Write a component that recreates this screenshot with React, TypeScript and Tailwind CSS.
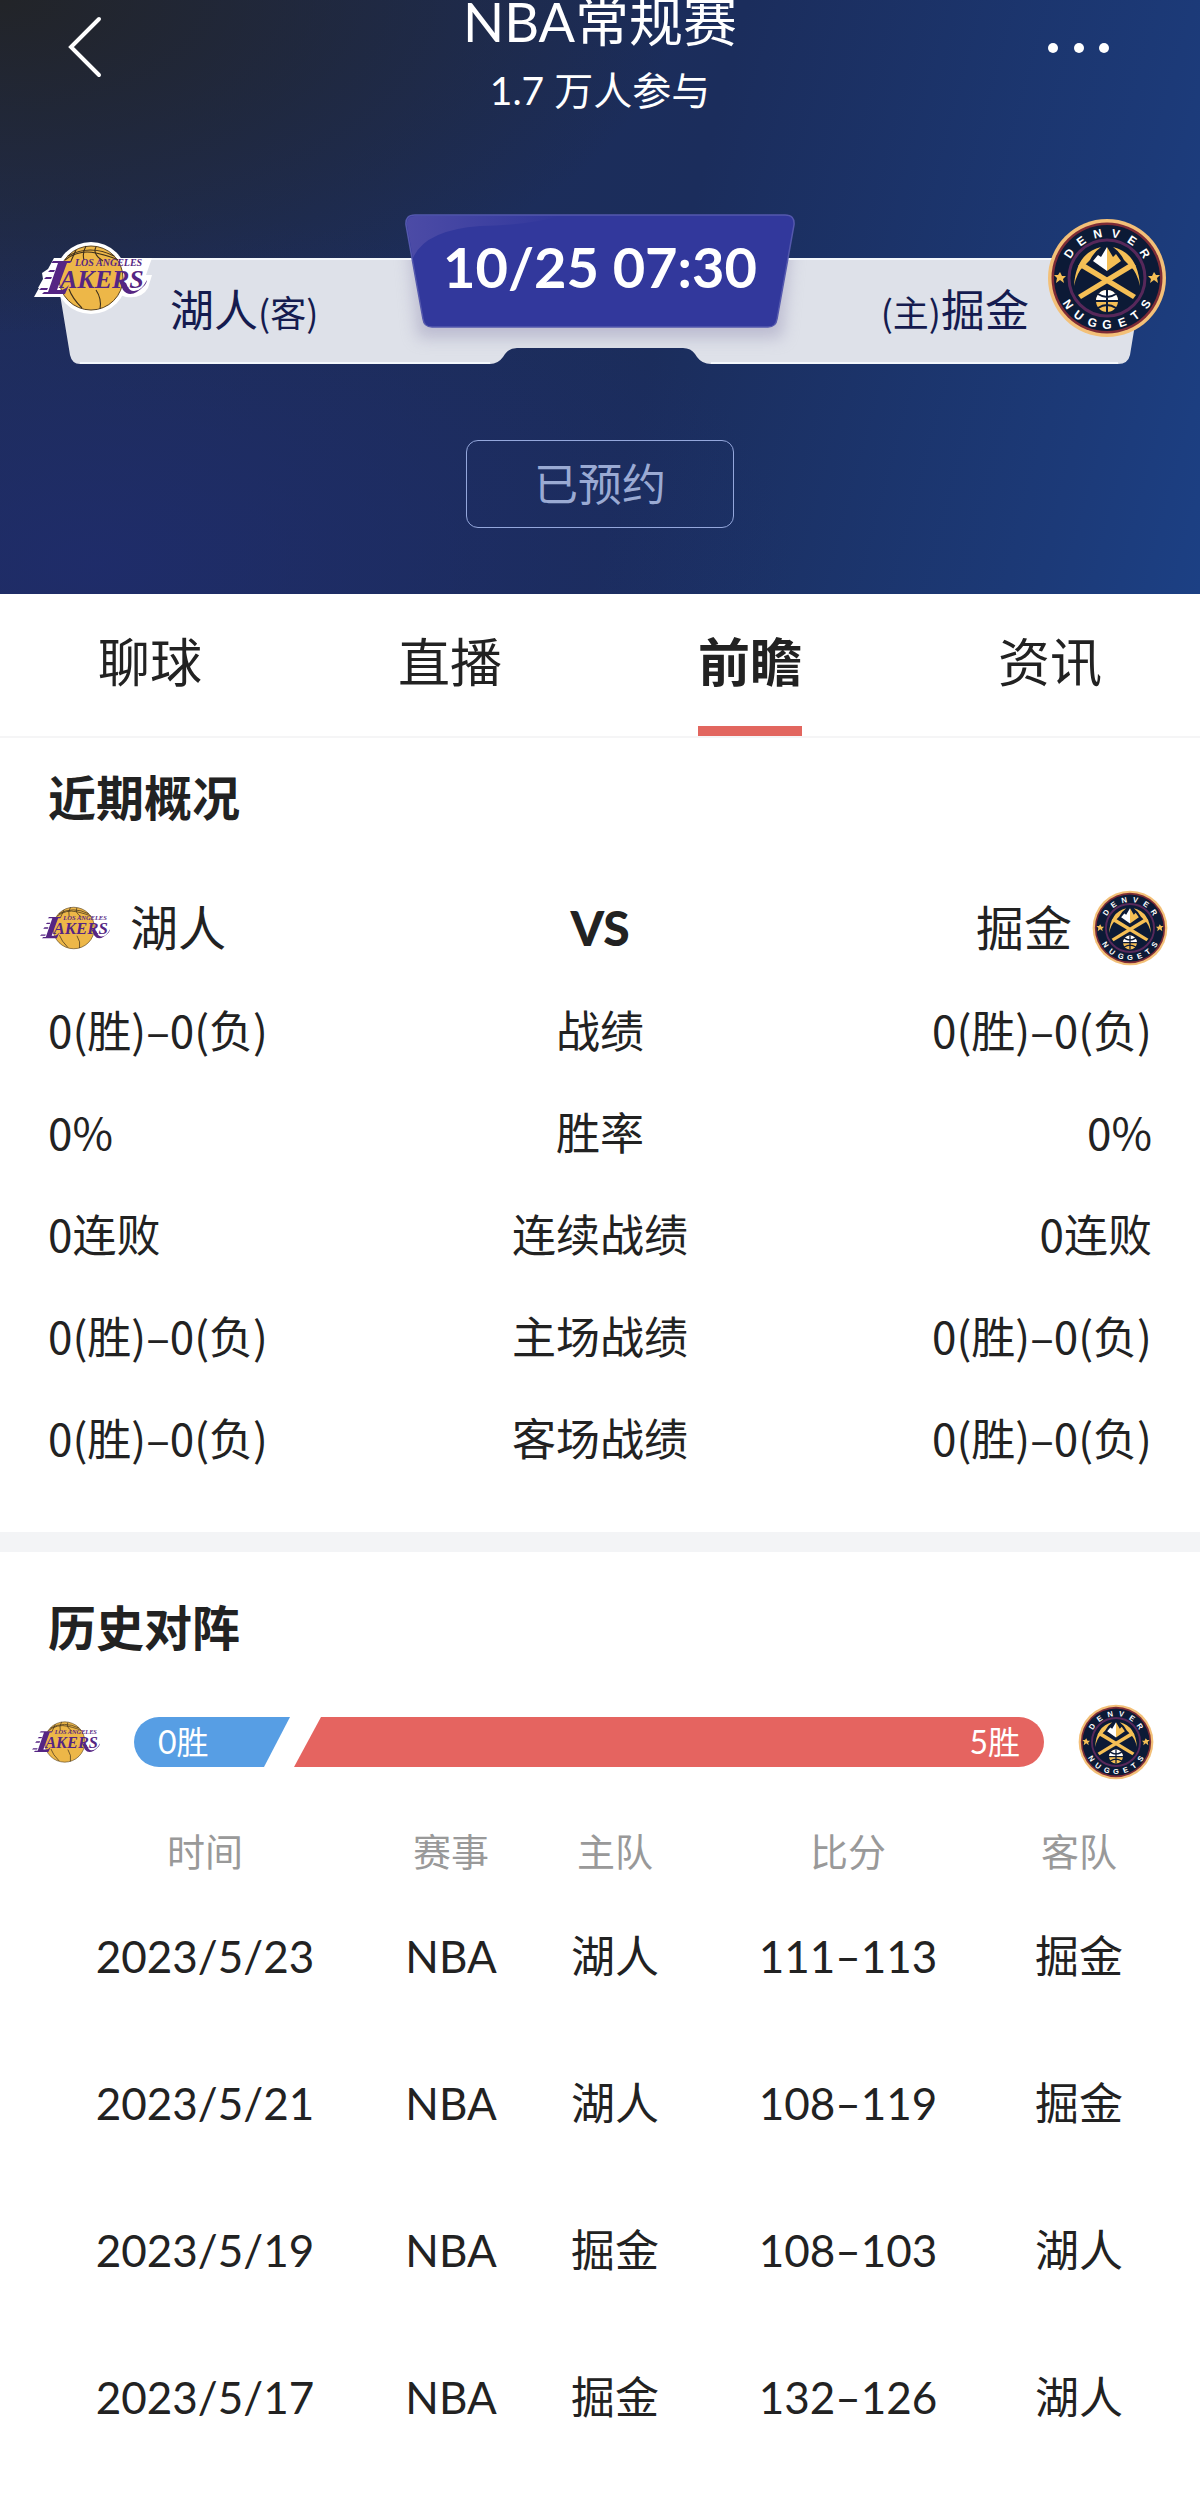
import { useState } from "react";

const TABS = ["聊球", "直播", "前瞻", "资讯"];

const STATS = [
  { label: "战绩", away: "0(胜)–0(负)", home: "0(胜)–0(负)" },
  { label: "胜率", away: "0%", home: "0%" },
  { label: "连续战绩", away: "0连败", home: "0连败" },
  { label: "主场战绩", away: "0(胜)–0(负)", home: "0(胜)–0(负)" },
  { label: "客场战绩", away: "0(胜)–0(负)", home: "0(胜)–0(负)" },
];

const HISTORY = [
  { date: "2023/5/23", event: "NBA", home: "湖人", score: "111–113", away: "掘金" },
  { date: "2023/5/21", event: "NBA", home: "湖人", score: "108–119", away: "掘金" },
  { date: "2023/5/19", event: "NBA", home: "掘金", score: "108–103", away: "湖人" },
  { date: "2023/5/17", event: "NBA", home: "掘金", score: "132–126", away: "湖人" },
];

function LakersLogo({ className, outlined = false }: { className: string; outlined?: boolean }) {
  return (
    <svg viewBox={outlined ? "0 0 118 74" : "5 3 108 68"} className={className} role="img" aria-label="湖人">
      {outlined && (
        <g fill="#fff">
          <circle cx="57" cy="37" r="36" />
          <path d="M20 17H118L112 34H118L114 47Q108 58 92 56L80 52L30 56H0L5 47H4L9 38L8 32L14 28Z" />
        </g>
      )}
      <circle cx="57" cy="37" r="32" fill="#edb748" stroke="#5b4420" strokeWidth="1" />
      <g fill="none" stroke="#3d2f1c" strokeWidth="1.1">
        <path d="M34 15Q56 3 80 15" />
        <path d="M31 19Q45 8 62 12T84 19" />
        <path d="M42 9L37 20M52 5Q48 12 50 19M62 6Q58 13 69 20" />
        <path d="M35 48Q38 57 48 67M62 49Q68 58 66 68" />
      </g>
      <g fill="#552583">
        <path d="M19 20H38L36 22H33L23 49H28Q32 48 35 44L31 53H8L10 51H14L24 22H17Z" />
        <path d="M16 29H21L20 31H14ZM12 36H18L17 38H10ZM7 47H14L13 49H5Z" />
        <path d="M84 38L89 49Q97 59 111 44Q113 41 113 39Q107 51 99 50Q95 50 92 42Z" />
        <text x="26" y="47" fontSize="26" className="font-['Liberation_Serif',serif] font-bold italic">
          AKERS
        </text>
        <text x="41" y="25" fontSize="10" className="font-['Liberation_Serif',serif] font-bold italic">
          LOS ANGELES
        </text>
      </g>
    </svg>
  );
}

const DENVER = [
  ["D", -57],
  ["E", -35],
  ["N", -12],
  ["V", 11],
  ["E", 34],
  ["R", 57],
] as const;

const NUGGETS = [
  ["N", 56],
  ["U", 37],
  ["G", 18],
  ["G", 0],
  ["E", -19],
  ["T", -37],
  ["S", -56],
] as const;

function NuggetsLogo({ className }: { className: string }) {
  return (
    <svg viewBox="0 0 120 120" className={className} role="img" aria-label="掘金">
      <circle cx="60" cy="60" r="59" fill="#f3c078" />
      <circle cx="60" cy="60" r="55.5" fill="#7d2b36" />
      <circle cx="60" cy="60" r="53" fill="#0c1a36" />
      <circle cx="60" cy="60" r="38" fill="none" stroke="#57285a" strokeWidth="3" />
      <g fill="#fff" fontSize="12" textAnchor="middle" className="font-['Liberation_Sans_Narrow','Liberation_Sans',sans-serif] font-bold">
        {DENVER.map(([char, deg], i) => (
          <text key={i} x="60" y="19" transform={`rotate(${deg} 60 60)`}>
            {char}
          </text>
        ))}
        {NUGGETS.map(([char, deg], i) => (
          <text key={i} x="60" y="111" transform={`rotate(${deg} 60 60)`}>
            {char}
          </text>
        ))}
      </g>
      <g fill="#f5bf55">
        <path d="M13 54L15 58L19 58L16 61L17 65L13 62L9 65L10 60L7 57L11 57Z" />
        <path d="M107 54L109 57L113 57L110 60L111 65L107 62L103 65L104 61L101 58L105 58Z" />
        <path d="M60 29L66 39L69 36L74 43L60 53Z" />
        <path d="M85 44L89 48L34 81L31 77Z" />
        <path d="M54 29Q29 35 27 68Q30 54 37 48L43 42Q47 34 54 29Z" />
        <path d="M35 44L31 48L86 81L89 77Z" />
        <path d="M66 29Q91 35 93 68Q90 54 83 48L77 42Q73 34 66 29Z" />
      </g>
      <path d="M60 29L54 39L51 37L46 43L60 53Z" fill="#fff" />
      <circle cx="60" cy="83" r="11" fill="#f5bf55" />
      <path d="M49 83A11 11 0 0 1 71 83Z" fill="#fff" />
      <path
        d="M60 72V94M49 83H71M51 76Q60 82 69 76M51 90Q60 84 69 90"
        fill="none"
        stroke="#0c1a36"
        strokeWidth="2"
      />
    </svg>
  );
}

function Scoreboard() {
  return (
    <div className="relative mt-[104px] grid h-[150px] grid-cols-[1fr_auto_1fr] items-start">
      <svg
        viewBox="0 0 1200 150"
        preserveAspectRatio="none"
        className="absolute inset-0 h-full w-full overflow-visible"
        aria-hidden="true"
      >
        <defs>
          <linearGradient id="shine" x1="0" y1="0" x2="1" y2="0">
            <stop offset="0" stopColor="#4c4ba6" />
            <stop offset="1" stopColor="#32389c" />
          </linearGradient>
          <filter id="soft" x="-10%" y="-20%" width="120%" height="150%">
            <feGaussianBlur stdDeviation="8" />
          </filter>
          <clipPath id="plate">
            <path d="M54 44H1146L1130 141Q1128 150 1118 150H711Q702 150 697 143L695 140Q691 134 683 134H517Q509 134 505 140L503 143Q498 150 490 150H80Q72 150 70 141Z" />
          </clipPath>
        </defs>
        <g clipPath="url(#plate)">
          <rect x="50" y="44" width="1100" height="106" fill="#dee1e9" />
          <path d="M408 20H792L782 124H418Z" fill="#9a96b8" opacity="0.5" filter="url(#soft)" />
          <path d="M50 45H1150" stroke="#f3f7fc" strokeWidth="2" />
        </g>
        <path d="M80 149H490M711 149H1118" stroke="#f3f7fc" strokeWidth="2" />
        <path
          d="M415 1H785Q795 1 794 11L777 105Q776 113 768 113H432Q424 113 423 105L406 11Q405 1 415 1Z"
          fill="#32389c"
          stroke="#5458ad"
          strokeWidth="1.5"
        />
        <path d="M415 2H560Q530 11 480 12Q425 16 413 44L407 11Q406 2 415 2Z" fill="url(#shine)" />
      </svg>

      <div className="relative flex items-start gap-[18px] pl-[34px]">
        <LakersLogo outlined className="mt-[27px] h-[74px] w-[118px]" />
        <p className="mt-[72px] font-['Noto_Sans_CJK_SC',sans-serif] text-[44px] leading-[44px] whitespace-nowrap text-[#151b4f]">
          湖人<span className="text-[36px]">(客)</span>
        </p>
      </div>
      <time className="relative mt-[25px] text-[56px] leading-[56px] font-bold whitespace-nowrap text-white">
        10/25 07:30
      </time>
      <div className="relative flex items-start justify-end gap-[18px] pr-[33px]">
        <p className="mt-[72px] font-['Noto_Sans_CJK_SC',sans-serif] text-[44px] leading-[44px] whitespace-nowrap text-[#151b4f]">
          <span className="text-[36px]">(主)</span>掘金
        </p>
        <NuggetsLogo className="mt-1 h-[120px] w-[120px]" />
      </div>
    </div>
  );
}

function MatchHeader() {
  return (
    <header className="flex flex-col bg-[radial-gradient(ellipse_at_0%_0%,#222428_0%,#22242800_40%),radial-gradient(ellipse_at_8%_95%,#1f2c6ecc_0%,#1f2c6e00_45%),linear-gradient(105deg,#1f2d54_0%,#1b2d5c_55%,#1c3a78_88%,#1c4084_100%)] pb-[66px] text-white">
      <div className="flex items-start justify-between px-[66px]">
        <button aria-label="返回" className="mt-[15px] w-[90px]">
          <svg viewBox="0 0 38 64" className="h-16 w-[38px]" fill="none" stroke="#fff" strokeWidth="4" strokeLinecap="round">
            <path d="M33 4L5 32L33 60" />
          </svg>
        </button>
        <div className="text-center">
          <h1 className="text-[54px] leading-[44px]">NBA常规赛</h1>
          <p className="mt-[26px] text-[39px] leading-[40px]">1.7 万人参与</p>
        </div>
        <button aria-label="更多" className="mt-10 w-[90px]">
          <svg viewBox="0 0 70 16" className="h-4 w-[70px]" fill="#fff">
            <circle cx="9" cy="8" r="5" />
            <circle cx="35" cy="8" r="5" />
            <circle cx="60" cy="8" r="5" />
          </svg>
        </button>
      </div>
      <Scoreboard />
      <button className="mt-[76px] h-[88px] w-[268px] self-center rounded-xl border border-[#94a7dc] text-[44px] text-[#9aaad3]">
        已预约
      </button>
    </header>
  );
}

export default function App() {
  const [active, setActive] = useState("前瞻");

  return (
    <div className="min-h-screen overflow-x-hidden bg-white font-[Lato,'Noto_Sans_CJK_SC',sans-serif] text-[#222]">
      <MatchHeader />

      <nav className="grid h-36 grid-cols-4 border-b-2 border-[#f5f5f6]">
        {TABS.map((tab) => (
          <button
            key={tab}
            onClick={() => setActive(tab)}
            className={`flex justify-center text-[52px] ${tab === active ? "font-bold" : ""}`}
          >
            <span
              className={`flex h-full items-center border-b-[10px] pt-1 ${
                tab === active ? "border-[#e2665f]" : "border-transparent"
              }`}
            >
              {tab}
            </span>
          </button>
        ))}
      </nav>

      <section className="pt-8 pb-11">
        <h2 className="px-12 text-[48px] leading-14 font-bold">近期概况</h2>
        <div className="mt-16 grid h-[76px] grid-cols-3 items-center px-8 text-[48px] leading-[72px]">
          <div className="flex items-center gap-5 pl-2">
            <LakersLogo className="h-[46px] w-[70px]" />
            湖人
          </div>
          <strong className="text-center font-black">VS</strong>
          <div className="flex items-center justify-end gap-5">
            掘金
            <NuggetsLogo className="h-[76px] w-[76px]" />
          </div>
        </div>
        <div className="mt-3 px-12">
          <table className="w-full table-fixed font-['Noto_Sans_CJK_SC',sans-serif] text-[44px] leading-[64px]">
            <tbody>
              {STATS.map((s) => (
                <tr key={s.label} className="h-[102px]">
                  <td className="text-left">{s.away}</td>
                  <th scope="row" className="text-center font-normal">{s.label}</th>
                  <td className="text-right">{s.home}</td>
                </tr>
              ))}
            </tbody>
          </table>
        </div>
      </section>

      <div className="h-5 bg-[#f3f4f6]" />

      <section className="pt-12">
        <h2 className="px-12 text-[48px] leading-14 font-bold">历史对阵</h2>
        <div className="mt-12 flex h-[76px] items-center gap-[34px] pr-[46px] pl-8">
          <LakersLogo className="h-[46px] w-[68px] shrink-0" />
          <div className="flex flex-1 gap-1 text-[32px] leading-[50px] text-white">
            <div className="w-[156px] rounded-l-full bg-[#579ee4] pl-6 [clip-path:polygon(0_0,100%_0,calc(100%-26px)_100%,0_100%)]">
              0胜
            </div>
            <div className="flex-1 rounded-r-full bg-[#e56460] pr-6 text-right [clip-path:polygon(27px_0,100%_0,100%_100%,0_100%)]">
              5胜
            </div>
          </div>
          <NuggetsLogo className="h-[76px] w-[76px] shrink-0" />
        </div>

        <div className="mt-10 px-[46px]">
          <table className="w-full table-fixed text-center text-[44px]">
            <colgroup>
              <col className="w-[318px]" />
              <col className="w-[174px]" />
              <col className="w-[154px]" />
              <col className="w-[312px]" />
              <col className="w-[150px]" />
            </colgroup>
            <thead>
              <tr className="h-[62px] text-[38px] leading-[60px] text-[#999]">
                <th className="font-normal">时间</th>
                <th className="font-normal">赛事</th>
                <th className="font-normal">主队</th>
                <th className="font-normal">比分</th>
                <th className="font-normal">客队</th>
              </tr>
            </thead>
            <tbody>
              {HISTORY.map((g) => (
                <tr key={g.date} className="h-[147px]">
                  <td>{g.date}</td>
                  <td>{g.event}</td>
                  <td>{g.home}</td>
                  <td>{g.score}</td>
                  <td>{g.away}</td>
                </tr>
              ))}
            </tbody>
          </table>
        </div>
      </section>
    </div>
  );
}
